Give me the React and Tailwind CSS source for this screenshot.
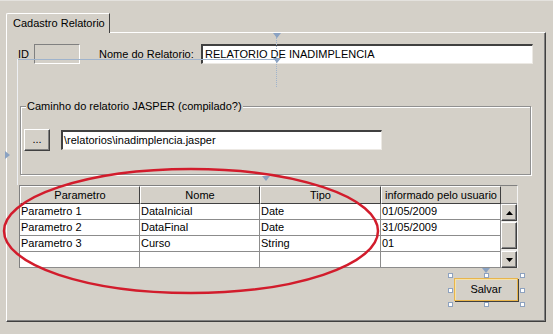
import React from 'react'

const rows = [
  ['Parametro 1', 'DataInicial', 'Date', '01/05/2009'],
  ['Parametro 2', 'DataFinal', 'Date', '31/05/2009'],
  ['Parametro 3', 'Curso', 'String', '01'],
  ['', '', '', ''],
]

const cols = [
  { label: 'Parametro', w: 'w-[120px]' },
  { label: 'Nome', w: 'w-[120px]' },
  { label: 'Tipo', w: 'w-[121px]' },
  { label: 'informado pelo usuario', w: 'w-[120px]' },
]

function Arrow({ up }) {
  return (
    <svg width="7" height="4" viewBox="0 0 7 4">
      {up ? <polygon points="0,4 7,4 3.5,0" fill="#000" /> : <polygon points="0,0 7,0 3.5,4" fill="#000" />}
    </svg>
  )
}

function Handle({ x, y }) {
  return (
    <div
      className="absolute w-[5px] h-[5px] bg-white border border-[#8ea2bf]"
      style={{ left: x - 2, top: y - 2 }}
    />
  )
}

function Tri({ x, y, dir = 'down' }) {
  return (
    <svg className="absolute" style={{ left: x - 4, top: y - 4 }} width="8" height="8" viewBox="0 0 8 8">
      {dir === 'down'
        ? <polygon points="0,1 8,1 4,6" fill="#8aa2c2" />
        : <polygon points="1,0 1,8 6,4" fill="#8aa2c2" />}
    </svg>
  )
}

export default function App() {
  return (
    <div className="relative w-[553px] h-[334px] overflow-hidden bg-[#d4d0c8] text-[11px] leading-none text-black font-['Liberation_Sans',Arial,sans-serif]">
      <div className="h-px bg-[#e4e2de]" />
      <div className="pt-[12px] pl-[6px]">
        {/* aba */}
        <div className="relative z-10 -mb-px w-[104px] h-[20px] pl-[6px] pt-[4px] bg-[#d4d0c8] border-t border-l border-white border-r border-r-[#404040] rounded-tl-[2px]">
          Cadastro Relatorio
        </div>

        {/* painel */}
        <div className="w-[540px] h-[290px] border-t border-l border-white border-r border-b border-r-[#404040] border-b-[#404040] shadow-[inset_-1px_-1px_0_#808080]">
          {/* linha ID / Nome */}
          <div className="flex items-center mt-[11px] ml-[11px]">
            <span className="w-[16px]">ID</span>
            <div className="w-[46px] h-[20px] border-t border-l border-[#808080] border-r border-b border-r-white border-b-white" />
            <span className="ml-[19px] w-[102px]">Nome do Relatorio:</span>
            <div className="w-[332px] h-[20px] flex items-center pl-[2px] bg-white border-t-2 border-l-2 border-t-[#404040] border-l-[#404040] border-r border-b border-r-[#ece9e4] border-b-[#ece9e4]">
              RELATORIO DE INADIMPLENCIA
            </div>
          </div>

          {/* grupo caminho */}
          <div className="relative mt-[42px] ml-[13px] w-[511px] h-[69px] border border-[#909090] shadow-[inset_1px_1px_0_#fff,1px_1px_0_#fff]">
            <span className="absolute -top-[6px] left-[5px] px-[1px] bg-[#d4d0c8]">
              Caminho do relatorio JASPER (compilado?)
            </span>
            <div className="flex items-center mt-[22px] ml-[3px]">
              <button className="w-[26px] h-[22px] flex items-center justify-center pb-[2px] bg-[#d4d0c8] border border-t-white border-l-white border-r-[#404040] border-b-[#404040] shadow-[inset_-1px_-1px_0_#808080]">
                ...
              </button>
              <div className="ml-[11px] w-[321px] h-[20px] flex items-center pl-[1px] bg-white border-t-2 border-l-2 border-t-[#404040] border-l-[#404040] border-r border-b border-r-[#ece9e4] border-b-[#ece9e4]">
                \relatorios\inadimplencia.jasper
              </div>
            </div>
          </div>

          {/* tabela */}
          <div className="flex mt-[10px] ml-[12px] w-[499px] h-[83px] border-t border-l border-[#808080] border-r border-r-[#f4f4f4]">
            <div className="flex flex-col">
              <div className="flex h-[18px]">
                {cols.map(c => (
                  <div
                    key={c.label}
                    className={`${c.w} flex items-center justify-center bg-[#d4d0c8] border-t border-l border-t-white border-l-white border-r border-b border-r-[#404040] border-b-[#404040]`}
                  >
                    {c.label}
                  </div>
                ))}
              </div>
              <div className="flex-1 bg-white overflow-hidden">
                {rows.map((r, i) => (
                  <div key={i} className="flex h-[16px]">
                    {r.map((v, j) => (
                      <div
                        key={j}
                        className={`${cols[j].w} flex items-center pl-px border-r border-b border-[#8c8c8c]`}
                      >
                        {v}
                      </div>
                    ))}
                  </div>
                ))}
              </div>
            </div>

            {/* barra de rolagem */}
            <div className="flex flex-col w-[17px]">
              <div className="h-[18px] bg-[#d4d0c8] border-b border-[#808080]" />
              <div className="flex-1 flex flex-col bg-[#ecebe8]">
                <div className="h-[17px] flex items-center justify-center bg-[#d4d0c8] border border-t-white border-l-white border-r-[#404040] border-b-[#404040] shadow-[inset_-1px_-1px_0_#808080]">
                  <Arrow up />
                </div>
                <div className="mt-px h-[27px] bg-[#d4d0c8] border border-t-white border-l-white border-r-[#404040] border-b-[#404040] shadow-[inset_-1px_-1px_0_#808080]" />
                <div className="mt-[2px] h-[17px] flex items-center justify-center bg-[#d4d0c8] border border-t-white border-l-white border-r-[#404040] border-b-[#404040] shadow-[inset_-1px_-1px_0_#808080]">
                  <Arrow />
                </div>
              </div>
            </div>
          </div>

          {/* salvar */}
          <button className="mt-[10px] ml-[447px] w-[64px] h-[23px] flex items-center justify-center bg-[#d4d0c8] border border-[#e8b54c] shadow-[1px_1px_0_#404040,inset_1px_1px_0_#f6e2a8]">
            Salvar
          </button>
        </div>
      </div>

      {/* guias do editor */}
      <div className="absolute left-[18px] top-[59px] w-[262px] h-px bg-[#9fb3cc]" />
      <div className="absolute left-[17px] top-[59px] w-px h-[126px] bg-[#eef0f4]" />
      <div className="absolute left-[276px] top-[37px] h-[50px] border-l border-dotted border-[#9fb3cc]" />
      <Tri x={277} y={36} />
      <Tri x={277} y={61} />
      <Tri x={266} y={179} />
      <Tri x={486} y={271} />
      <Tri x={8} y={155} dir="right" />

      {[[450, 275], [486, 275], [522, 275], [450, 290], [522, 290], [450, 304], [486, 304], [522, 304]].map(([x, y]) => (
        <Handle key={`${x}-${y}`} x={x} y={y} />
      ))}

      {/* marcação vermelha */}
      <svg className="absolute left-0 top-0 pointer-events-none" width="553" height="334">
        <ellipse cx="191" cy="231" rx="187" ry="62" fill="none" stroke="#d21c2c" strokeWidth="2.5" />
      </svg>
    </div>
  )
}
